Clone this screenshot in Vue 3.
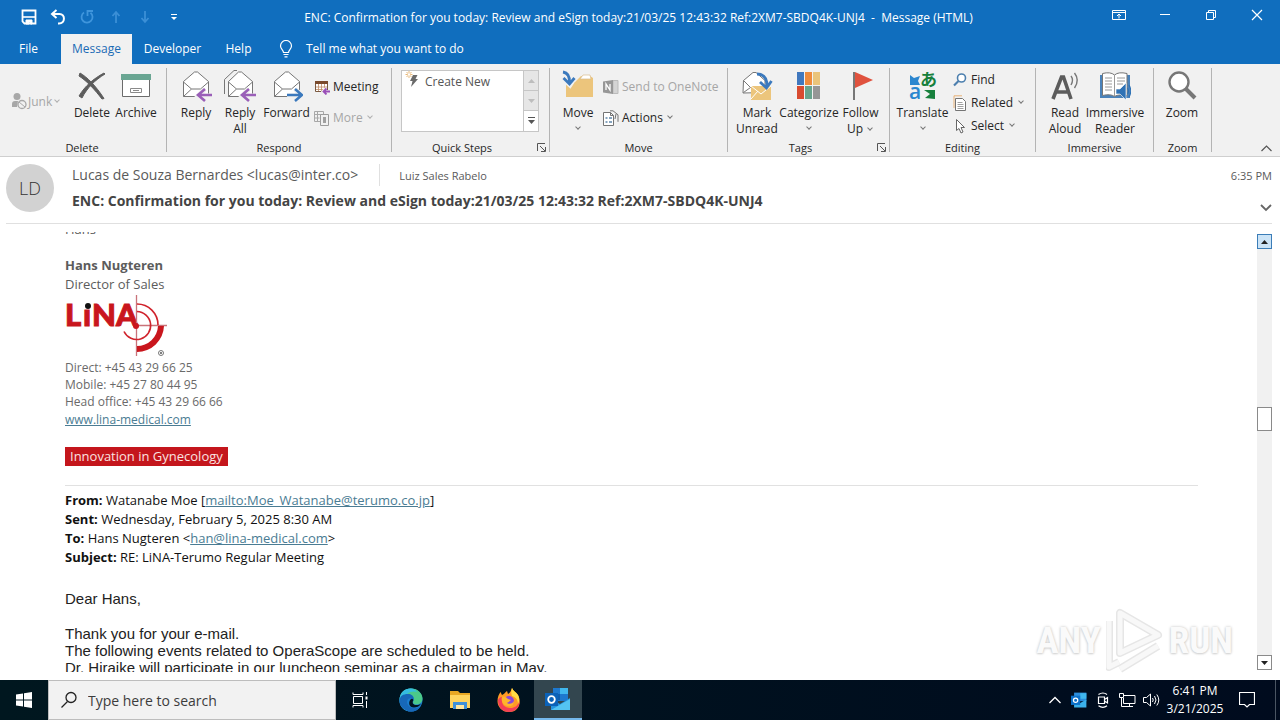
<script setup>
import { ref } from 'vue'

const search = ref('')
const tabs = ['File', 'Message', 'Developer', 'Help']
const phones = ['Direct: +45 43 29 66 25', 'Mobile: +45 27 80 44 95', 'Head office: +45 43 29 66 66']
</script>

<template>
  <div class="window">
    <header class="titlebar">
      <div class="quick">
        <button aria-label="Save"><svg width="16" height="16" viewBox="0 0 16 16"><path d="M1.500 1.500h13v13h-11l-2-2z" fill="none" stroke="#fff" stroke-width="1.800" /><path d="M2 8h12" stroke="#fff" stroke-width="1.600" /><path d="M5 11h6v4H9.500v-2H8v2H5z" fill="#fff" stroke="#fff" /></svg></button>
        <button aria-label="Undo"><svg width="16" height="16" viewBox="0 0 16 16"><path d="M6.500 1L2 5l4.500 4M2 5h7.500c6 0 6 9.500-.5 9.500H8" fill="none" stroke="#fff" stroke-width="2" /></svg></button>
        <button aria-label="Redo"><svg width="16" height="16" viewBox="0 0 16 16"><path d="M5 3.500a5.500 5.500 0 1 0 6.500.3M8.500 7V2H14" fill="none" stroke="#3f95dc" stroke-width="1.800" /></svg></button>
        <button aria-label="Previous item"><svg width="16" height="16" viewBox="0 0 16 16"><path d="M8 14V3M4.500 7L8 3l3.500 4" fill="none" stroke="#3b8fd6" stroke-width="1.800" /></svg></button>
        <button aria-label="Next item"><svg width="16" height="16" viewBox="0 0 16 16"><path d="M8 2v11M4.500 9L8 13l3.500-4" fill="none" stroke="#3b8fd6" stroke-width="1.800" /></svg></button>
        <button aria-label="Customize toolbar"><svg width="16" height="16" viewBox="0 0 16 16"><path d="M5 5.500h6" stroke="#fff" /><path d="M5 8h6l-3 3z" fill="#fff" /></svg></button>
      </div>
      <h1 class="caption">ENC: Confirmation for you today: Review and eSign today:21/03/25 12:43:32 Ref:2XM7-SBDQ4K-UNJ4&nbsp; -&nbsp; Message (HTML)</h1>
      <div class="controls">
        <button aria-label="Ribbon options"><svg width="14" height="12" viewBox="0 0 14 12"><path d="M.5 1.500h13v9H.5zM.5 3.500h13M7 9.500V5M5 7l2-2 2 2" fill="none" stroke="#fff" /></svg></button>
        <button aria-label="Minimize"><svg width="12" height="12" viewBox="0 0 12 12"><path d="M1 5.500h10" stroke="#fff" /></svg></button>
        <button aria-label="Restore"><svg width="12" height="12" viewBox="0 0 12 12"><path d="M1.500 3.500h7v7h-7zM3.500 3.500v-2h7v7h-2" fill="none" stroke="#fff" /></svg></button>
        <button aria-label="Close"><svg width="12" height="12" viewBox="0 0 12 12"><path d="M1 1l10 10M11 1L1 11" stroke="#fff" stroke-width="1.200" /></svg></button>
      </div>
    </header>

    <nav class="tabs">
      <button v-for="t in tabs" :key="t" :class="['tab', t.toLowerCase()]">{{ t }}</button>
      <button class="tell">
        <svg width="14" height="18" viewBox="0 0 14 18"><path d="M4.500 12.500C4.500 10 1.500 9 1.500 6a5.500 5.500 0 0 1 11 0c0 3-3 4-3 6.500zM4.500 14.500h5M5.500 16.800h3" fill="none" stroke="#fff" stroke-width="1.200" /></svg>
        Tell me what you want to do
      </button>
    </nav>

    <section class="ribbon">
      <div class="group g-delete">
        <div class="items">
          <button class="small dim junk">
            <svg width="16" height="18" viewBox="0 0 16 18"><circle cx="6" cy="4.500" r="3.500" fill="#a8a8a8" /><path d="M1 15v-3q0-3 3-3h3l-1 6z" fill="#a8a8a8" /><circle cx="11" cy="12.500" r="4" fill="#f1f1f1" stroke="#a8a8a8" stroke-width="1.300" /><path d="M8 10l6 5" stroke="#a8a8a8" /></svg>
            Junk<i class="chev"></i>
          </button>
          <button class="big w44">
            <svg width="32" height="32" viewBox="0 0 32 32"><path d="M4 3c7 4 16 13 24 25.500l-2 .5C19 20 11 11 3 6zM29 4C19 10 11 18 6 28l-3-2C9 16 17 9 28 3z" fill="#5c5c5c" stroke="#5c5c5c" /></svg>
            <span>Delete</span>
          </button>
          <button class="big w44">
            <svg width="32" height="32" viewBox="0 0 32 32"><path d="M2.500 9.500h27v17h-27z" fill="#fff" stroke="#6b6b6b" /><path d="M1 4h30v6H1z" fill="#6aa693" /><path d="M10.500 18.500h11v4h-11zM13 20.500h6" fill="none" stroke="#8a8a8a" /></svg>
            <span>Archive</span>
          </button>
        </div>
        <h2>Delete</h2>
      </div>

      <div class="group g-respond">
        <div class="items">
          <button class="big w44">
            <svg width="32" height="32" viewBox="0 0 32 32"><path d="M3.500 11.500L14.500 2h3l11 9.500v15h-25z" fill="#fff" stroke="#767676" /><path d="M3.500 12l8 7h9l8-7M3.500 26.500l8-7.500" fill="none" stroke="#767676" /><path d="M32 26H19M25 19l-7 7 7 6" fill="none" stroke="#f1f1f1" stroke-width="5" /><path d="M32 25H19M25 19l-7 6 7 6" fill="none" stroke="#9a5fb8" stroke-width="2.600" /></svg>
            <span>Reply</span>
          </button>
          <button class="big w44">
            <svg width="32" height="32" viewBox="0 0 32 32"><path d="M.5 24V9.500L10 .5h3" fill="none" stroke="#767676" /><path d="M4.500 11.500L14.500 2h3l11 9.500v15h-24z" fill="#fff" stroke="#767676" /><path d="M4.500 12l8 7h8l8-7M4.500 26.500l8-7.500" fill="none" stroke="#767676" /><path d="M32 26H19M25 19l-7 7 7 6" fill="none" stroke="#f1f1f1" stroke-width="5" /><path d="M32 25H19M25 19l-7 6 7 6" fill="none" stroke="#9a5fb8" stroke-width="2.600" /></svg>
            <span>Reply<br>All</span>
          </button>
          <button class="big w49">
            <svg width="32" height="32" viewBox="0 0 32 32"><path d="M3.500 11.500L14.500 2h3l11 9.500v15h-25z" fill="#fff" stroke="#767676" /><path d="M3.500 12l8 7h9l8-7M3.500 26.500l8-7.500" fill="none" stroke="#767676" /><path d="M16 26h14M24 19l7 7-7 6" fill="none" stroke="#f1f1f1" stroke-width="5" /><path d="M16 25h14M24 19l7 6-7 6" fill="none" stroke="#3b79bd" stroke-width="2.600" /></svg>
            <span>Forward</span>
          </button>
          <div class="stack two">
            <button class="small">
              <svg width="16" height="16" viewBox="0 0 16 16"><path d="M1.500 3.500h12v9h-12z" fill="#fff" stroke="#7a5a42" /><path d="M1 2h13v3H1z" fill="#7a4a2c" /><path d="M4.500 5v7M7.500 5v7M10.500 5v7M2 8h11M2 10.500h11" stroke="#c08a64" stroke-width=".8" /><path d="M16 12.500h-6M12 9.500l-3 3 3 3" fill="none" stroke="#f1f1f1" stroke-width="3" /><path d="M16 12.500h-6M12.500 9.500l-3 3 3 3" fill="none" stroke="#9a4fb8" stroke-width="1.800" /></svg>
              Meeting
            </button>
            <button class="small dim">
              <svg width="16" height="16" viewBox="0 0 16 16"><path d="M.5 1.500h9v10h-9zM3.500 1v10M.5 4.500h9M.5 8h5" fill="none" stroke="#a8a8a8" /><path d="M6.500 4.500h8v11h-8z" fill="#f1f1f1" stroke="#9c9c9c" /><path d="M9 7h3v6H9z" fill="#a0a0a0" /></svg>
              More<i class="chev"></i>
            </button>
          </div>
        </div>
        <h2>Respond</h2>
      </div>

      <div class="group g-quick">
        <div class="items">
          <div class="gallery">
            <button class="create">
              <svg width="20" height="18" viewBox="0 0 20 18"><path d="M4 0v7M.5 3.500h7M1.500 1l5 5M6.500 1l-5 5" stroke="#e8b878" /><circle cx="4" cy="3.500" r="1.200" fill="#fff" /><path d="M8 4h4.500l-2 4H13L6 16l1.500-6H5z" fill="#6a6a6a" /></svg>
              Create New
            </button>
            <div class="spin">
              <button aria-label="Scroll up" class="off"><svg width="7" height="4" viewBox="0 0 7 4"><path d="M0 4l3.500-4L7 4z" fill="#bdbdbd" /></svg></button>
              <button aria-label="Scroll down" class="off"><svg width="7" height="4" viewBox="0 0 7 4"><path d="M0 0h7L3.500 4z" fill="#bdbdbd" /></svg></button>
              <button aria-label="More steps"><svg width="7" height="8" viewBox="0 0 7 8"><path d="M0 .5h7" stroke="#555" /><path d="M0 3h7L3.500 7z" fill="#555" /></svg></button>
            </div>
          </div>
        </div>
        <h2>Quick Steps</h2>
        <button class="launch" aria-label="Quick Steps settings"><svg width="9" height="9" viewBox="0 0 9 9"><path d="M8 .5H.5V8M3 3l5 5M8.500 4v4.500H4" fill="none" stroke="#555" /></svg></button>
      </div>

      <div class="group g-move">
        <div class="items">
          <button class="big w44">
            <svg width="32" height="32" viewBox="0 0 32 32"><path d="M4 12h9l6-6h9l3 2v19H4z" fill="#ecc57c" /><path d="M18 9l3-4h7l1 4z" fill="#fff" stroke="#d8bc8c" stroke-width=".7" /><path d="M2 2q6 1 6 11M1.500 9L8 15l4.500-7" fill="none" stroke="#f1f1f1" stroke-width="5" /><path d="M1 2q7 1 6.500 11M1.500 8L7.500 14l5-6" fill="none" stroke="#3b79bd" stroke-width="2.800" /></svg>
            <span>Move<i class="chev under"></i></span>
          </button>
          <div class="stack two">
            <button class="small dim">
              <svg width="16" height="16" viewBox="0 0 16 16"><path d="M10 1.500h5v13h-5z" fill="#d4d4d4" stroke="#bbb" /><path d="M0 2.500l10-1.500v14L0 13.500z" fill="#979797" /><path d="M3 11V5l4 6V5" fill="none" stroke="#fff" stroke-width="1.300" /></svg>
              Send to OneNote
            </button>
            <button class="small">
              <svg width="16" height="16" viewBox="0 0 16 16"><path d="M.5 2.500h7l3 3v10H.5zM7.500 2.500v3h3" fill="#fff" stroke="#747474" /><path d="M2.500 8h2M6 8h3M2.500 12h2M6 12h3" stroke="#5f87aa" stroke-width="1.500" /><path d="M7 .8h3l5 4v7M12 9l1-5" fill="none" stroke="#747474" /></svg>
              Actions<i class="chev"></i>
            </button>
          </div>
        </div>
        <h2>Move</h2>
      </div>

      <div class="group g-tags">
        <div class="items">
          <button class="big w48">
            <svg width="32" height="32" viewBox="0 0 32 32"><path d="M2.500 10.500L12 2.500h3l9 8v12l-22 .5z" fill="#fff" stroke="#767676" /><path d="M2.500 10.500l7 7-7 5" fill="none" stroke="#767676" /><path d="M10 16h20v14H10z" fill="#ecc57c" /><path d="M10 16l10 8 10-8M10 29l7-8" fill="none" stroke="#fff" /><path d="M16 4q10 0 10 12M19 12l6.500 6 5-7" fill="none" stroke="#3b79bd" stroke-width="2.800" /></svg>
            <span>Mark<br>Unread</span>
          </button>
          <button class="big w56">
            <svg width="32" height="32" viewBox="0 0 32 32"><path d="M4 2h7v13H4z" fill="#4078be" /><path d="M12 2h7v13h-7z" fill="#ee8b3c" /><path d="M20 2h7v13h-7z" fill="#eac47a" /><path d="M4 16h7v13H4z" fill="#d84b30" /><path d="M12 16h7v13h-7z" fill="#68a48d" /><path d="M20 16h7v13h-7z" fill="#969696" /></svg>
            <span>Categorize<i class="chev under"></i></span>
          </button>
          <button class="big w47">
            <svg width="32" height="32" viewBox="0 0 32 32"><path d="M10 2l18 8-18 8z" fill="#e0523e" /><path d="M9 2v28" stroke="#777" stroke-width="2" /></svg>
            <span>Follow<br>Up<i class="chev"></i></span>
          </button>
        </div>
        <h2>Tags</h2>
        <button class="launch" aria-label="Tag settings"><svg width="9" height="9" viewBox="0 0 9 9"><path d="M8 .5H.5V8M3 3l5 5M8.500 4v4.500H4" fill="none" stroke="#555" /></svg></button>
      </div>

      <div class="group g-edit">
        <div class="items">
          <button class="big w51">
            <svg class="tr" width="32" height="32" viewBox="0 0 32 32"><path d="M3 5l4 3 6-2-2 5 2 4H3z" fill="#2b86cf" /><path d="M28 29l-10-1 5-4-6-4h11z" fill="#17803c" /><text x="2" y="29" font-size="21" font-weight="600" fill="#2b86cf">a</text><text x="13" y="16" font-size="17" font-weight="700" fill="#17803c">あ</text></svg>
            <span>Translate<i class="chev under"></i></span>
          </button>
          <div class="stack">
            <button class="small">
              <svg width="14" height="16" viewBox="0 0 14 16"><circle cx="8.500" cy="6" r="4" fill="#fff" stroke="#4c7fae" stroke-width="1.600" /><path d="M5.500 9L1 13.500" stroke="#4c7fae" stroke-width="2.200" /></svg>
              Find
            </button>
            <button class="small">
              <svg width="14" height="16" viewBox="0 0 14 16"><path d="M1 13V.8h8" fill="none" stroke="#e8b278" /><path d="M2.500 3.500h7l3 3v9h-10z" fill="#fff" stroke="#747474" /><path d="M4.500 7.500h5M4.500 9.500h6M4.500 11.500h6M4.500 13.500h6" stroke="#888" stroke-width=".8" /></svg>
              Related<i class="chev"></i>
            </button>
            <button class="small">
              <svg width="14" height="16" viewBox="0 0 14 16"><path d="M3.500 1.500l8 8H8l2 4.500-2 1-2-4.500-2.500 2z" fill="#fff" stroke="#666" /></svg>
              Select<i class="chev"></i>
            </button>
          </div>
        </div>
        <h2>Editing</h2>
      </div>

      <div class="group g-imm">
        <div class="items">
          <button class="big w44">
            <svg width="32" height="32" viewBox="0 0 32 32"><path d="M4 29L12.500 7h2L22 29M7 22h12" fill="none" stroke="#5c5c5c" stroke-width="3.600" /><path d="M22 6q3 4 0 9M25.500 3q5.500 7 0 15" fill="none" stroke="#777" stroke-width="1.400" /></svg>
            <span>Read<br>Aloud</span>
          </button>
          <button class="big w56">
            <svg width="32" height="32" viewBox="0 0 32 32"><path d="M1 5h30v23H1z" fill="#4a82ba" /><path d="M3.500 3.500q8-2 12 1.500 4-3.500 12.500-1.500v22q-8-2-12.500 1-4-3-12-1z" fill="#fff" stroke="#767676" /><path d="M15.500 5v21M6 8h7M6 11h7M6 14h7M6 17h7M6 20h7M18 8h8M18 11h8M18 14h6" stroke="#999" /><path d="M17 19h4l6-6v17l-6-6h-4z" fill="#2f72b5" stroke="#fff" stroke-width=".6" /><path d="M28.500 18q2 3 0 6M30 15q3.500 6 0 12" fill="none" stroke="#2f72b5" stroke-width="1.200" /></svg>
            <span>Immersive<br>Reader</span>
          </button>
        </div>
        <h2>Immersive</h2>
      </div>

      <div class="group g-zoom">
        <div class="items">
          <button class="big w56">
            <svg width="32" height="32" viewBox="0 0 32 32"><circle cx="13" cy="12" r="9.500" fill="#fff" stroke="#777" stroke-width="2.400" /><path d="M20 19l9 9" stroke="#777" stroke-width="4" /></svg>
            <span>Zoom</span>
          </button>
        </div>
        <h2>Zoom</h2>
      </div>
      <button class="collapse" aria-label="Collapse ribbon"><svg width="11" height="7" viewBox="0 0 11 7"><path d="M.5 6l5-5 5 5" fill="none" stroke="#555" stroke-width="1.200" /></svg></button>
    </section>

    <section class="mailhead">
      <div class="avatar">LD</div>
      <div class="meta">
        <div class="people">
          <span class="from">Lucas de Souza Bernardes &lt;lucas@inter.co&gt;</span>
          <span class="to">Luiz Sales Rabelo</span>
        </div>
        <h2 class="subject">ENC: Confirmation for you today: Review and eSign today:21/03/25 12:43:32 Ref:2XM7-SBDQ4K-UNJ4</h2>
      </div>
      <div class="when">
        <time>6:35 PM</time>
        <button aria-label="Expand header"><svg width="12" height="8" viewBox="0 0 12 8"><path d="M1 1l5 5 5-5" fill="none" stroke="#666" stroke-width="1.800" /></svg></button>
      </div>
    </section>

    <main class="reader">
      <div class="viewport">
        <article class="content">
          <p class="sig">Hans</p>
          <p class="sig strong">Hans Nugteren</p>
          <p class="sig">Director of Sales</p>
          <svg class="logo" width="104" height="64" viewBox="0 0 104 64" role="img" aria-label="LiNA">
            <g fill="#c9161d" stroke="#c9161d" stroke-width="1"><text x="0" y="32" class="lina">L</text><text x="18" y="32" class="lina">ı</text><text x="27" y="32" class="lina">NA</text></g>
            <circle cx="23" cy="12" r="3" fill="#111" />
            <path d="M71.500 1v61M71 31.500h31" stroke="#c9737a" stroke-width="1.300" />
            <path d="M72 10a21 21 0 0 1 21 21M72 17.500a14 14 0 1 1-13 20" fill="none" stroke="#d0232c" stroke-width="1.600" />
            <path d="M99 32A27 27 0 0 1 72 58v-6A21 21 0 0 0 93 32z" fill="#c9161d" /><circle cx="71" cy="32" r="3" fill="#c9161d" />
            <circle cx="96" cy="59" r="2.500" fill="none" stroke="#555" stroke-width=".8" /><circle cx="96" cy="59" r="1" fill="#555" />
          </svg>
          <p v-for="p in phones" :key="p" class="phone">{{ p }}</p>
          <p class="phone web"><a href="#">www.lina-medical.com</a></p>
          <p class="banner">Innovation in Gynecology</p>
          <hr>
          <p class="hdr"><b>From:</b> Watanabe Moe [<a href="#">mailto:Moe_Watanabe@terumo.co.jp</a>]</p>
          <p class="hdr"><b>Sent:</b> Wednesday, February 5, 2025 8:30 AM</p>
          <p class="hdr"><b>To:</b> Hans Nugteren &lt;<a href="#">han@lina-medical.com</a>&gt;</p>
          <p class="hdr"><b>Subject:</b> RE: LiNA-Terumo Regular Meeting</p>
          <p class="msg dear">Dear Hans,</p>
          <p class="msg">Thank you for your e-mail.</p>
          <p class="msg">The following events related to OperaScope are scheduled to be held.</p>
          <p class="msg">Dr. Hiraike will participate in our luncheon seminar as a chairman in May.</p>
        </article>
      </div>
      <div class="scroll">
        <button class="up" aria-label="Scroll message up"><svg width="7" height="4" viewBox="0 0 7 4"><path d="M0 4l3.500-4L7 4z" fill="#222" /></svg></button>
        <div class="track"><div class="thumb"></div></div>
        <button aria-label="Scroll message down"><svg width="7" height="4" viewBox="0 0 7 4"><path d="M0 0h7L3.500 4z" fill="#222" /></svg></button>
      </div>
      <div class="mark">
        <span>ANY</span>
        <svg width="58" height="66" viewBox="0 0 58 66"><path d="M14 5v40L52 27zM3 13v46l10-5M14 61l38-23" fill="none" stroke="#e6e6e6" stroke-width="8" stroke-linejoin="round" /><path d="M14 5v40L52 27zM3 13v46l10-5M14 61l38-23" fill="none" stroke="#f8f8f8" stroke-width="5" stroke-linejoin="round" /></svg>
        <span>RUN</span>
      </div>
    </main>

    <footer class="taskbar">
      <button class="start" aria-label="Start"><svg width="16" height="16" viewBox="0 0 16 16"><path d="M0 2.500l7-1v6H0zM8 1.300L16 0v7.500H8zM0 8.500h7v6l-7-1zM8 8.500h8V16l-8-1.300z" fill="#fff" /></svg></button>
      <label class="find">
        <svg width="18" height="18" viewBox="0 0 18 18"><circle cx="11" cy="6.500" r="5" fill="none" stroke="#222" stroke-width="1.300" /><path d="M7.500 10.500L1.500 16.500" stroke="#222" stroke-width="1.300" /></svg>
        <input v-model="search" type="text" placeholder="Type here to search" aria-label="Type here to search">
      </label>
      <button class="app view" aria-label="Task view"><svg width="17" height="16" viewBox="0 0 17 16"><path d="M1 .5v2h10v-2M1 15.500v-2h10v2M1.500 4.500h9v7h-9zM14.500 0v3M14.500 9v7" fill="none" stroke="#fff" /><path d="M13.500 4.500h2v3h-2z" fill="#fff" /></svg></button>
      <button class="app" aria-label="Edge"><svg width="24" height="24" viewBox="0 0 24 24"><circle cx="12" cy="12" r="11.500" fill="#1b7fd0" /><path d="M.5 12C1 4 6 .5 12 .5c7 0 11.500 5 11.500 10 0 4-3 6-6.500 6-3 0-3.500-2-2.500-3.500C16 9 13 6 9 6 4 6 1 9 .5 12z" fill="#4bc98a" /><path d="M.5 12C1 4 6 .5 11 .5c4 0 6 2 7 3.500C13 2 6 5 5 12c-1 5 1 9 5 11.300C4 22.500.5 18 .5 12z" fill="#35bde0" /><path d="M.6 12C1 8 4 6 9 6c4 0 6 3 5.500 5.500C10 8 7 12 8.500 16c2 5 9 5 13 2.500-3 5-9 6-13 4.500C3 21 0 17 .6 12z" fill="#1768b8" /><path d="M14.500 12c-2 3 0 5 3 5 2 0 3-.5 4.500-1.500-1.500 3-4.500 4-7 4-5 0-6-5-3.500-8 1-1 2-1 3 .5z" fill="#03141f" /></svg></button>
      <button class="app" aria-label="File Explorer"><svg width="22" height="20" viewBox="0 0 22 20"><path d="M1 1h8l2 2h10v4H1z" fill="#e8a723" /><path d="M1 5h20v13H1z" fill="#ffd45e" /><path d="M4 12h14v7H4z" fill="#3f91d8" /><path d="M7 15h8v4H7z" fill="#ffe8a0" /></svg></button>
      <button class="app" aria-label="Firefox"><svg width="24" height="24" viewBox="0 0 24 24"><path d="M15 0c1 3 4 4 6 7 4 7 1 17-9 17C5 24 .5 19 .5 13c0-4 1.500-7 3-9l1.500 3C8 6 8 4 10 3l1 3c2-1 3-3 4-6z" fill="#ff9a25" /><path d="M1 12c0 8 5 12 11 12s11-5 10.500-11c-2 5-5 7-9 7C7 20 4 16 5 9c-2 0-3 1-4 3z" fill="#f33f56" /><path d="M15 0c1 3 4 4 6 7 2 4 1 7 0 9 0-5-3-7-6-8-1-3-1-5 0-8z" fill="#ffdc45" /><circle cx="12" cy="13" r="5" fill="#8b46d8" /><path d="M5 9c2-1 4 0 6 2l3 1c-2 2-3 2-4 3 3 2 6 0 7-2 0 5-4 6-7 5-4-1-6-5-5-9z" fill="#ffb52c" /></svg></button>
      <button class="app active" aria-label="Outlook"><svg width="26" height="24" viewBox="0 0 26 24"><path d="M8 1h15v13H8z" fill="#1d78ce" /><path d="M15 1h8v6h-8z" fill="#40b7ee" /><path d="M8 7h7v6H8z" fill="#0d5dad" /><path d="M6 12l9 5 10-6v12H6z" fill="#2394df" /><path d="M6 23l19-11v11z" fill="#54c4f2" /><path d="M0 6h13v13H0z" fill="#0b62b8" /><circle cx="6.500" cy="12.500" r="3.300" fill="none" stroke="#fff" stroke-width="1.800" /></svg></button>
      <div class="tray">
        <button aria-label="Hidden icons"><svg width="12" height="8" viewBox="0 0 12 8"><path d="M.5 7L6 1.500 11.500 7" fill="none" stroke="#fff" stroke-width="1.300" /></svg></button>
        <button aria-label="Outlook tray"><svg width="16" height="16" viewBox="0 0 26 24"><path d="M5 0h20v14H5z" fill="#2b8ddb" /><path d="M15 1h10v9H15z" fill="#40b7ee" /><path d="M5 12l10 5 10-6v13H5z" fill="#3bb1ea" /><path d="M0 5h15v15H0z" fill="#0b70c8" /><circle cx="7.500" cy="12.500" r="3.500" fill="none" stroke="#fff" stroke-width="2" /></svg></button>
        <button aria-label="Meet now"><svg width="16" height="16" viewBox="0 0 16 16"><path d="M3.500 5h6v6.500h-6zM9.500 7.500l3-2v5.500l-3-2M3.500 2.500Q8-.5 12 2.500M3.500 13.800q4.500 3 8.500 0" fill="none" stroke="#fff" stroke-width="1.200" /></svg></button>
        <button aria-label="Network"><svg width="17" height="16" viewBox="0 0 17 16"><path d="M5 3.500h11v8H4.500V6M8 14.500h6M10.500 11.500v3M.5 1.500h4v4h-4zM2.500 5.500v9H8" fill="none" stroke="#fff" /></svg></button>
        <button aria-label="Volume"><svg width="17" height="16" viewBox="0 0 17 16"><path d="M.5 5.500h3l4-3.500v12l-4-3.500h-3zM9.500 6q1.500 2 0 4M11.500 4q3 4 0 8M13.800 2.500q4 5.500 0 11" fill="none" stroke="#fff" /></svg></button>
        <div class="clock"><time>6:41 PM</time><time>3/21/2025</time></div>
        <button class="note" aria-label="Notifications"><svg width="16" height="16" viewBox="0 0 16 16"><path d="M.5.5h15v12h-5L8 15l-2.500-2.500h-5z" fill="none" stroke="#fff" stroke-width="1.200" /></svg></button>
      </div>
    </footer>
  </div>
</template>

<style>
body { margin: 0; }
</style>

<style scoped>
* { box-sizing: border-box; }
.window {
  min-height: 100vh;
  display: grid;
  grid-template-columns: minmax(0, 1fr);
  grid-template-rows: auto auto auto auto 1fr auto;
  font-family: "Open Sans", "Noto Sans", "Noto Sans CJK JP", sans-serif;
  font-size: 12px;
  color: #262626;
  background: #fff;
}
button { font: inherit; color: inherit; background: none; border: 0; padding: 0; margin: 0; }
h1, h2, p { margin: 0; font-size: inherit; font-weight: 400; }
svg { display: block; flex: none; }

.titlebar { display: flex; align-items: center; height: 34px; background: #106ebe; color: #fff; }
.quick { display: flex; gap: 13px; padding-left: 21px; }
.quick button { width: 16px; }
.caption { flex: 1; text-align: center; white-space: nowrap; line-height: 32px; padding-top: 2px; padding-right: 1px; }
.controls { display: flex; padding-bottom: 4px; }
.controls button { width: 46px; display: flex; justify-content: center; }

.tabs { display: flex; height: 30px; background: #106ebe; color: #fff; line-height: 30px; }
.tab.file { width: 57px; margin-right: 4px; }
.tab.message { width: 71px; background: #f1f1f1; color: #1a6bb5; }
.tab.developer { width: 81px; }
.tab.help { width: 51px; }
.tell { display: flex; align-items: center; gap: 13px; margin-left: 15px; }

.ribbon { display: flex; background: #f1f1f1; border-bottom: 1px solid #cfcfcf; padding: 4px 0; }
.group { display: flex; flex-direction: column; border-right: 1px solid #b4b4b4; position: relative; flex: none; }
.group h2 { text-align: center; line-height: 16px; height: 12px; font-size: 11px; white-space: nowrap; }
.items { display: flex; height: 72px; }
.g-delete { width: 167px; padding-left: 11px; }
.g-delete h2 { padding-right: 13px; }
.g-respond { width: 225px; }
.g-respond .items { padding-left: 7px; }
.g-quick { width: 158px; }
.g-quick h2 { padding-right: 17px; }
.g-move { width: 178px; }
.g-move .items { padding-left: 6px; }
.g-tags { width: 162px; }
.g-tags .items { padding-left: 5px; }
.g-tags h2 { padding-right: 16px; }
.g-edit { width: 146px; }
.g-edit .items { padding-left: 7px; }
.g-imm { width: 118px; }
.g-imm .items { padding-left: 7px; }
.g-zoom { width: 58px; }
.big { display: flex; flex-direction: column; align-items: center; padding-top: 2px; line-height: 16px; text-align: center; white-space: nowrap; }
.big span { display: block; padding-top: 3px; }
.w44 { width: 44px; } .w47 { width: 47px; } .w48 { width: 48px; } .w49 { width: 49px; } .w51 { width: 51px; } .w56 { width: 56px; }
.small { display: flex; align-items: center; gap: 3px; height: 23px; white-space: nowrap; }
.dim { color: #a6a6a6; }
.junk { width: 59px; height: 66px; gap: 1px; }
.stack { padding-left: 3px; }
.stack.two { padding-top: 3px; }
.stack.two .small { height: 31px; }
.g-edit .stack { padding-left: 5px; }
.g-edit .small { gap: 4px; }
.chev { display: inline-block; width: 4px; height: 4px; border: solid #777; border-width: 0 1px 1px 0; transform: rotate(45deg); margin: 0 2px 3px 5px; flex: none; }
.small .chev { margin-left: 2px; }
.dim .chev { border-color: #b0b0b0; }
.chev.under { display: block; margin: 4px auto 0; }
.gallery { display: flex; width: 138px; height: 62px; margin: 2px 0 0 9px; border: 1px solid #c6c6c6; background: #fff; }
.create { flex: 1; display: flex; align-items: flex-start; color: #555; line-height: 22px; padding-left: 3px; }
.spin { width: 15px; border-left: 1px solid #c6c6c6; display: grid; grid-template-rows: 1fr 1fr 1fr; }
.spin button { display: grid; place-items: center; }
.spin .off { background: #e6e6e6; border-bottom: 1px solid #c6c6c6; }
.launch { position: absolute; right: 3px; bottom: 0; width: 9px; height: 9px; }
.collapse { margin: auto 8px 0 auto; }
.tr { overflow: visible; }
.tr text { font-family: "Open Sans", "Noto Sans CJK JP", sans-serif; }

.mailhead { display: flex; margin: 0 8px 0 6px; padding: 7px 0 11px; border-bottom: 1px solid #e0e0e0; color: #5a5a5a; }
.avatar { width: 48px; height: 48px; border-radius: 50%; background: #d2d2d2; font-size: 18px; font-weight: 300; line-height: 48px; text-align: center; color: #333; flex: none; }
.meta { flex: 1; min-width: 0; padding-left: 18px; white-space: nowrap; }
.people { display: flex; align-items: center; height: 22px; }
.from { font-size: 14px; padding-right: 21px; border-right: 1px solid #e0e0e0; line-height: 22px; }
.to { font-size: 11px; padding-left: 19px; }
.subject { font-size: 14px; font-weight: 700; line-height: 26px; padding-top: 2px; height: 26px; color: #444; }
.when { display: flex; flex-direction: column; align-items: flex-end; font-size: 11px; line-height: 24px; white-space: nowrap; }
.when button { margin-top: 16px; }

.reader { display: flex; min-height: 0; position: relative; padding: 8px 8px 8px 0; }
.viewport { flex: 1; overflow: hidden; contain: size; }
.content { padding: 0 59px 0 65px; margin-top: -12px; }
.sig { font-size: 13px; line-height: 19px; color: #5c5c5c; }
.sig.strong { font-weight: 700; margin-top: 17px; }
.logo { margin-bottom: 1px; }
.lina { font: 900 31px Lato, sans-serif; }
.phone { font-size: 12px; line-height: 17px; color: #6a6a6a; }
.web { line-height: 19px; }
a { color: #4a7c93; text-decoration: underline; }
.banner { width: max-content; background: #c4161c; color: #fbe3e0; font-size: 13px; line-height: 19px; padding: 0 5px; margin-top: 18px; }
hr { border: 0; border-top: 1px solid #e1e1e1; margin: 19px 0 5px; }
.hdr { font-size: 13px; line-height: 19px; color: #111; }
.msg { font-family: "Liberation Sans", Arial, sans-serif; font-size: 15px; line-height: 17px; color: #222; white-space: nowrap; }
.dear { margin: 23px 0 18px; }
.scroll { width: 15px; display: flex; flex-direction: column; padding: 2px 0; }
.scroll button { height: 15px; border: 1px solid #8a8a8a; background: #fff; display: grid; place-items: center; }
.scroll .up { border-color: #3b7db8; background: #cce4f7; }
.track { flex: 1; background: #f1f1f1; display: grid; grid-template-rows: 158fr 24px 224fr; }
.thumb { grid-row: 2; border: 1px solid #8a8a8a; background: #fff; }
.mark { position: absolute; right: 47px; bottom: 6px; display: flex; align-items: center; gap: 5px; }
.mark span { font: 700 37px/60px "Liberation Sans Narrow", "Roboto Condensed", Roboto, sans-serif; color: #fafafa; text-shadow: 0 0 3px #c4c4c4, 0 1px 2px #ddd; }

.taskbar { display: flex; align-items: stretch; height: 40px; background: linear-gradient(90deg, #00171f, #000b1e); color: #fff; padding-right: 4px; }
.taskbar button { display: grid; place-items: center; }
.start { width: 48px; }
.find { width: 288px; display: flex; align-items: center; gap: 10px; padding-left: 11px; background: #f2f2f2; border: 1px solid #bdbdbd; color: #333; }
.find input { flex: 1; min-width: 0; border: 0; outline: 0; background: none; font: 14px "Open Sans", sans-serif; color: #333; padding: 0; }
.find input::placeholder { color: #3c3c3c; opacity: 1; }
.app { width: 48px; margin-right: 1px; }
.app.view { margin-right: 3px; }
.active { background: #33464f; border-bottom: 2px solid #76b9ed; }
.tray { margin-left: auto; display: flex; border-right: 1px solid #4a5563; }
.tray button { width: 24px; }
.clock { width: 64px; display: flex; flex-direction: column; justify-content: center; align-items: center; line-height: 18px; white-space: nowrap; }
.tray .note { width: 40px; margin-right: 8px; }
</style>
